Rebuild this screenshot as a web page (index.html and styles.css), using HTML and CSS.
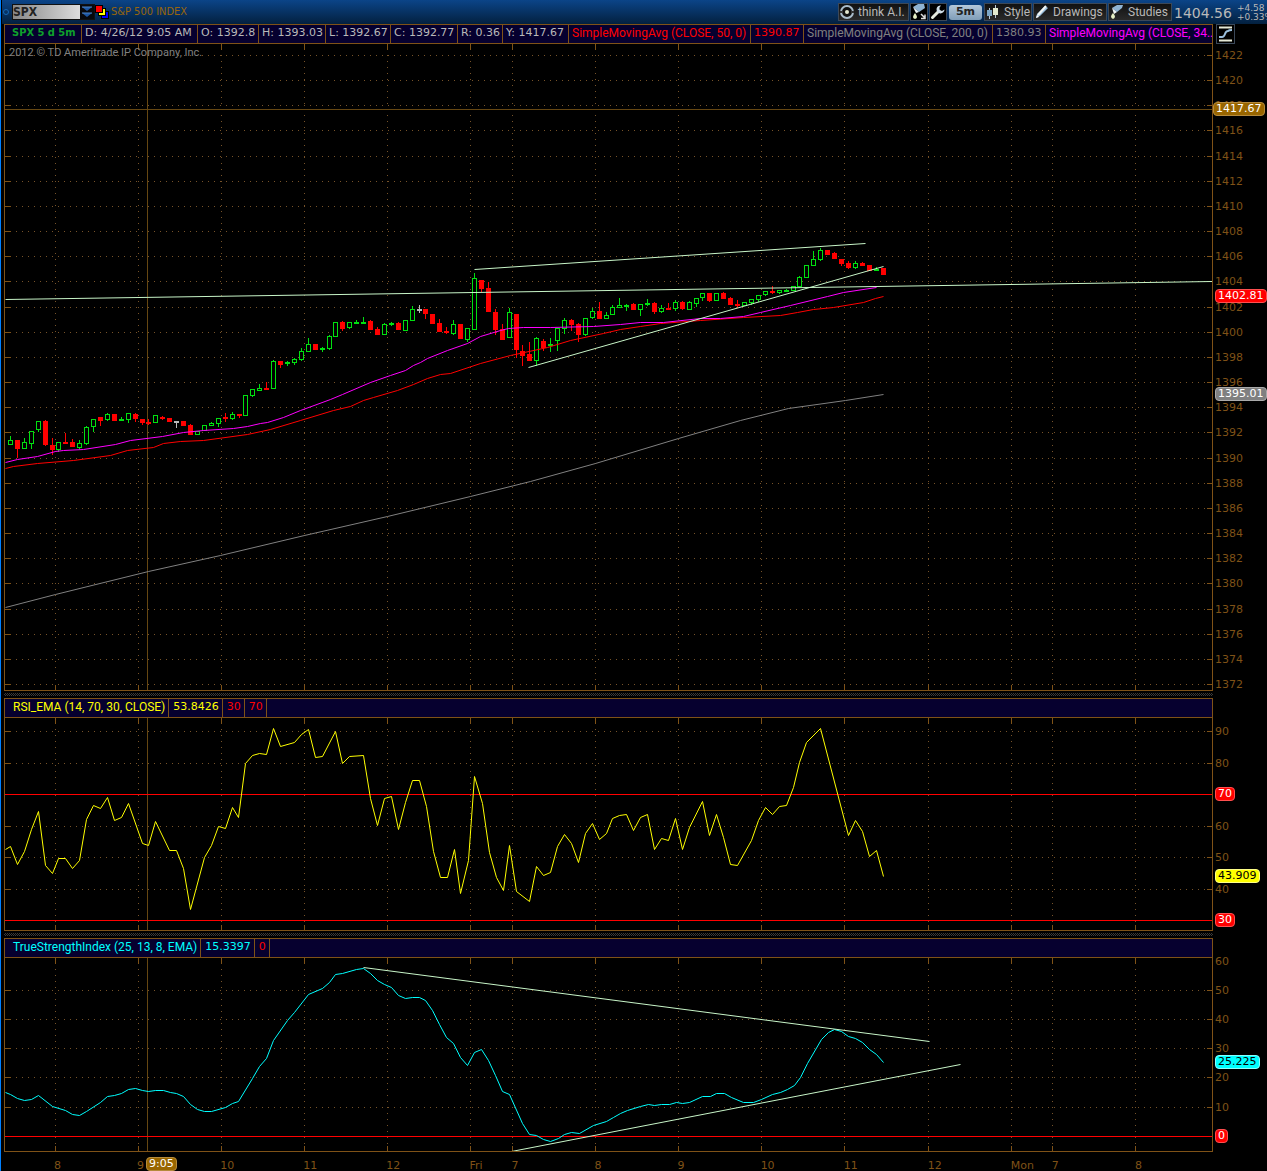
FILE: index.html
```html
<!DOCTYPE html>
<html lang="en">
<head>
  <meta charset="UTF-8">
  <meta name="viewport" content="width=device-width, initial-scale=1.0">
  <title>SPX 5 d 5m - Charts</title>
  <link rel="stylesheet" href="styles.css">
</head>
<body>
  <!-- Top toolbar -->
  <header class="toolbar">
    <span class="link-dot"></span>
    <div class="symbol-box">
      <input type="text" id="symbol" value="SPX" aria-label="Symbol">
      <button class="symbol-drop" aria-label="Recent symbols">
        <svg width="14" height="14" viewBox="0 0 14 14"><path d="M2 2h10L7 6zM2 8h10l-5 4z" fill="#1c55a0"/><path d="M2 2h10M2 8h10" stroke="#4c86c8"/></svg>
      </button>
    </div>
    <svg class="squares" width="14" height="14" viewBox="0 0 14 14" shape-rendering="crispEdges">
      <rect x="6" y="6" width="8" height="8" fill="#000"/>
      <rect x="7" y="7" width="6" height="6" fill="#00f"/>
      <rect x="3" y="3" width="8" height="8" fill="#000"/>
      <rect x="4" y="4" width="6" height="6" fill="#ff0"/>
      <rect x="0" y="0" width="8" height="8" fill="#000"/>
      <rect x="1" y="1" width="6" height="6" fill="#f00"/>
    </svg>
    <span class="symbol-name">S&amp;P 500 INDEX</span>

    <div class="tools">
      <button class="tool tool-ai">
        <svg width="16" height="16" viewBox="0 0 16 16"><circle cx="8" cy="8" r="6" fill="#111" stroke="#a9bccb" stroke-width="2"/><circle cx="8" cy="8" r="2" fill="#e4e8d0"/><path d="M1 8h3M12 8h3" stroke="#333" stroke-width="2"/></svg>
        <span>think A.I.</span>
      </button>
      <button class="tool tool-icon" aria-label="Add study">
        <svg width="16" height="16" viewBox="0 0 16 16"><path d="M2 3l5-3h6l1 4-6 4z" fill="#8fb3d2"/><path d="M2 3l6 5-3 1z" fill="#f0f6f8"/><path d="M4 9q-4 5 0 6q4-1 0-6" fill="#e6efc4"/><path d="M10 10l4 4M14 10.500v4h-4" stroke="#ddd" stroke-width="1.500" fill="none"/></svg>
      </button>
      <button class="tool tool-icon" aria-label="Settings">
        <svg width="16" height="16" viewBox="0 0 16 16"><path d="M2.500 13.500L9 7" stroke="#e3e9dc" stroke-width="3" stroke-linecap="round"/><path d="M11 1.500a4 4 0 1 0 3.500 4L12 7 9.500 6 9.500 3.500z" fill="#cfdde6"/></svg>
      </button>
      <button class="tool-period">5m</button>
      <button class="tool tool-style">
        <svg width="16" height="16" viewBox="0 0 16 16"><path d="M4.500 4v11M10.500 1v13" stroke="#b8c8d8"/><rect x="2" y="6" width="5" height="6" fill="#7ca6c6"/><rect x="8" y="4" width="5" height="7" fill="#e3ead0"/></svg>
        <span>Style</span>
      </button>
      <button class="tool tool-drawings">
        <svg width="16" height="16" viewBox="0 0 16 16"><path d="M2 14l1-4L11 2l3 2-8 8z" fill="#9cc0de"/><path d="M4 11l8-9" stroke="#f2f6f4" stroke-width="2"/><path d="M2 14l1-3 2 2z" fill="#fff"/></svg>
        <span>Drawings</span>
      </button>
      <button class="tool tool-studies">
        <svg width="16" height="16" viewBox="0 0 16 16"><path d="M3 4l5-3h6l-1 3-5 4z" fill="#8fb3d2"/><path d="M3 4l5 4-3 2z" fill="#f0f6f8"/><path d="M4 9q-4 4 0 6q4-2 0-6" fill="#e6efc4"/></svg>
        <span>Studies</span>
      </button>
    </div>
    <div class="quote">
      <span class="last">1404.56</span>
      <span class="change">+4.58<br>+0.33%</span>
    </div>
  </header>

  <main class="charts">
    <!-- Price -->
    <div class="legend-row">
      <div class="legend price-legend">
        <span class="ticker">SPX 5 d 5m</span>
        <span>D: 4/26/12 9:05 AM</span>
        <span>O: 1392.8</span>
        <span>H: 1393.03</span>
        <span>L: 1392.67</span>
        <span>C: 1392.77</span>
        <span>R: 0.36</span>
        <span>Y: 1417.67</span>
        <span class="study red">SimpleMovingAvg (CLOSE, 50, 0)</span>
        <span class="red">1390.87</span>
        <span class="study gray">SimpleMovingAvg (CLOSE, 200, 0)</span>
        <span class="gray">1380.93</span>
        <span class="study magenta">SimpleMovingAvg (CLOSE, 34..</span>
      </div>
      <div class="axis-head">
        <button class="scale-btn" aria-label="Fit scale">
          <svg width="17" height="18" viewBox="0 0 17 18"><path d="M2 2.500h13M2 15.500h13" stroke="#e6e9d6" stroke-width="2"/><path d="M2 12h3q2 0 3-3t3-3q1-1 4-1" stroke="#9cc0de" stroke-width="2" fill="none"/></svg>
        </button>
      </div>
    </div>
    <div class="plot-row price-row">
      <div class="plot">
        <svg id="pricePlot" viewBox="5 44 1207 646" preserveAspectRatio="none"></svg>
        <span class="copyright">2012 © TD Ameritrade IP Company, Inc.</span>
      </div>
      <div class="axis" id="priceAxis"></div>
    </div>

    <div class="splitter"></div>

    <!-- RSI -->
    <div class="legend-row">
      <div class="legend">
        <span class="first study yellow">RSI_EMA (14, 70, 30, CLOSE)</span>
        <span class="yellow">53.8426</span>
        <span class="red">30</span>
        <span class="red">70</span>
      </div>
      <div class="axis-head"></div>
    </div>
    <div class="plot-row rsi-row">
      <div class="plot">
        <svg id="rsiPlot" viewBox="5 718 1207 212" preserveAspectRatio="none"></svg>
      </div>
      <div class="axis" id="rsiAxis"></div>
    </div>

    <div class="splitter"></div>

    <!-- True Strength Index -->
    <div class="legend-row">
      <div class="legend">
        <span class="first study cyan">TrueStrengthIndex (25, 13, 8, EMA)</span>
        <span class="cyan">15.3397</span>
        <span class="red">0</span>
      </div>
      <div class="axis-head"></div>
    </div>
    <div class="plot-row tsi-row">
      <div class="plot">
        <svg id="tsiPlot" viewBox="5 958 1207 193" preserveAspectRatio="none"></svg>
      </div>
      <div class="axis" id="tsiAxis"></div>
    </div>

    <div class="time-axis" id="timeAxis"></div>
  </main>

  <script src="chart.js"></script>
</body>
</html>
```
FILE: styles.css
```css
* {
  box-sizing: border-box;
}
body {
  margin: 0;
  height: 100vh;
  min-height: 600px;
  display: flex;
  flex-direction: column;
  background: #000;
  color: #b9b9b9;
  border-left: 1px solid #0080ff;
  font-family: "DejaVu Sans", Verdana, sans-serif;
  font-size: 11px;
  line-height: 14px;
  overflow: hidden;
}
button,
input {
  font-family: inherit;
  font-size: inherit;
  line-height: inherit;
  color: inherit;
  margin: 0;
  padding: 0;
}
svg {
  display: block;
}

/* Toolbar */
.toolbar {
  flex: none;
  height: 24px;
  display: flex;
  align-items: center;
  margin-left: 1px;
  padding-left: 1px;
  background: linear-gradient(#0b4488, #03203f);
  white-space: nowrap;
  overflow: hidden;
}
.link-dot {
  width: 6px;
  height: 6px;
  border: 1px solid #1468b8;
  border-radius: 50%;
  margin-right: 3px;
}
.symbol-box {
  display: flex;
  height: 16px;
  border: 1px solid #111;
}
.symbol-box input {
  width: 67px;
  border: 0;
  background: linear-gradient(90deg, #888, #ddd);
  color: #222;
  font: bold 12px "DejaVu Sans Condensed", sans-serif;
}
.symbol-drop {
  width: 14px;
  border: 0;
  background: #08090c;
}
.squares {
  margin: 0 2px 0 0;
}
.symbol-name {
  flex: 1;
  color: #99660c;
  font-family: "DejaVu Sans Condensed", sans-serif;
}
.tools {
  display: flex;
  gap: 1px;
  align-items: center;
}
.tool {
  display: flex;
  align-items: center;
  gap: 3px;
  height: 18px;
  padding: 0;
  border: 1px solid #3b4858;
  background: linear-gradient(#111, #2a2a2a);
  text-align: left;
}
.tool-icon {
  width: 18px;
  background: #000;
}
.tool-ai { width: 71px; }
.tool-style { width: 48px; }
.tool-drawings { width: 74px; }
.tool-studies { width: 64px; }
.tool span {
  font-family: Roboto, sans-serif;
  font-size: 12px;
}
.tool-period {
  width: 33px;
  height: 15px;
  margin: 0 1px;
  border: 0;
  border-radius: 3px;
  background: linear-gradient(#b4c8da, #7f9db8);
  color: #222;
  font-weight: bold;
}
.quote {
  width: 95px;
  padding-left: 2px;
  display: flex;
  align-items: center;
  gap: 5px;
}
.last {
  font-size: 14px;
  line-height: 18px;
  padding-top: 2px;
}
.change {
  font-size: 9px;
  line-height: 9px;
  padding-top: 2px;
}

/* Panels */
.charts {
  flex: 1;
  min-height: 0;
  display: flex;
  flex-direction: column;
  padding-left: 3px;
}
.legend-row {
  flex: none;
  display: flex;
  height: 20px;
}
.legend {
  flex: 1;
  min-width: 0;
  display: flex;
  background: #06002f;
  border: 1px solid #7f5217;
  overflow: hidden;
  white-space: nowrap;
  line-height: 16px;
}
.legend span {
  padding: 0 3px 0 4px;
  border-right: 1px solid #7f5217;
}
.legend .ticker {
  color: #0fa02c;
  font-weight: bold;
  font-family: "DejaVu Sans Condensed", sans-serif;
  padding-left: 7px;
}
.legend .study {
  font-family: Roboto, sans-serif;
  font-size: 12px;
}
.legend .first {
  padding-left: 8px;
}
.price-legend {
  display: grid;
  grid-template-columns: 77px 116px 61px 67px 65px 67px 45px 66px 182px 53px 189px 53px 1fr;
}
.price-legend span {
  padding: 0 0 0 3px;
}
.price-legend span:last-child {
  border-right: 0;
}
.legend .red { color: #f00; }
.legend .gray { color: #808080; }
.legend .magenta { color: #f0f; }
.legend .yellow { color: #ff0; }
.legend .cyan { color: #0ff; }

.axis-head,
.axis {
  flex: none;
  width: 54px;
}
.scale-btn {
  margin-left: 3px;
  width: 19px;
  height: 20px;
  border: 1px solid #3b4858;
  background: #000;
}
.plot-row {
  display: flex;
  min-height: 0;
}
.price-row { flex: 647 1 0; }
.rsi-row { flex: 213 1 0; }
.tsi-row { flex: 194 1 0; }
.plot {
  flex: 1;
  min-width: 0;
  position: relative;
  border: solid #7f5217;
  border-width: 0 1px 1px;
}
.plot svg {
  width: 100%;
  height: 100%;
}
.copyright {
  position: absolute;
  left: 4px;
  top: 2px;
  color: #808080;
  font-family: Roboto, sans-serif;
  font-size: 11px;
}
.splitter {
  flex: none;
  height: 7px;
  margin-right: 54px;
  background: repeating-conic-gradient(#3a3a3a 0 25%, #000 0 50%) 0 0 / 2px 2px content-box;
  padding: 2px 0;
}

/* Axis labels */
.axis {
  position: relative;
  color: #7f5217;
}
.axis span {
  position: absolute;
  left: 2px;
  padding-top: 2px;
  transform: translateY(-50%);
}
.axis .tag,
.time-axis .tag {
  z-index: 1;
  padding: 0 2px;
  border: 1px solid;
  border-radius: 4px;
  line-height: 12px;
  color: #fff;
}
.axis .tag-cursor {
  left: 0;
}
.tag-cursor { background: #960; border-color: #b58a3c !important; }
.tag-red { background: #f00; border-color: #ff5050 !important; }
.tag-gray { background: #808080; border-color: #aaa !important; }
.tag-yellow { background: #ff0; border-color: #ff8 !important; color: #000 !important; }
.tag-cyan { background: #0ff; border-color: #8ff !important; color: #000 !important; }
.time-axis {
  flex: none;
  position: relative;
  height: 19px;
  margin-right: 55px;
  color: #7f5217;
}
.time-axis span {
  position: absolute;
  top: 7px;
}
.time-axis .tag {
  top: 5px;
}

/* Plot drawing */
.grid {
  fill: none;
  stroke: #775329;
  stroke-dasharray: 1 5;
  shape-rendering: crispEdges;
}
.tick {
  stroke: #7f5217;
  shape-rendering: crispEdges;
}
.cross {
  stroke: #664712;
  shape-rendering: crispEdges;
}
.level {
  stroke: #f00;
  shape-rendering: crispEdges;
}
.candle { shape-rendering: crispEdges; }
.up { stroke: #00e010; fill: #000; }
.down { stroke: #f00; fill: #f00; }
.flat { stroke: #b9b9b9; fill: #b9b9b9; }
.line { fill: none; stroke-width: 1; }
.ma34 { stroke: #f0f; }
.ma50 { stroke: #f00; }
.ma200 { stroke: #808080; }
.rsi { stroke: #ff0; }
.tsi { stroke: #0ff; }
.trend { stroke: #c8f5c8; }
```
FILE: chart.js
```js
const X0 = 5, X1 = 1212;
const hours = [
  [55, '8'], [138, '9'], [221, '10'], [304, '11'], [387, '12'], [470, 'Fri'], [512, '7'],
  [595, '8'], [678, '9'], [761, '10'], [844, '11'], [928, '12'], [1011, 'Mon'], [1052, '7'], [1135, '8']
];

// type, high, body top, body bottom, low
const candles = `
G 436 440 444 444|R 440 440 448 457|G 438 442 448 448|G 431 431 443 448|G 421 421 429 431|R 420 421 444 445
R 438 445 449 454|G 442 442 449 451|R 433 442 443 443|R 439 442 446 446|G 440 443 447 448|G 426 427 443 444
G 419 419 426 431|R 417 417 420 425|G 413 414 419 420|R 414 414 420 420|G 417 419 420 420|G 413 413 419 422
R 413 414 418 421|R 419 419 422 424|R 419 422 423 424|G 415 415 422 422|R 416 417 418 419|R 418 418 421 421
W 421 421 422 427|R 421 421 425 425|R 424 425 434 434|G 431 431 434 434|G 425 425 430 430|G 422 423 425 425
G 418 418 423 426|R 413 417 418 421|G 412 414 418 419|R 414 414 415 417|G 395 395 415 415|G 389 389 395 396
G 384 388 390 390|R 382 388 389 389|G 360 361 388 388|R 361 361 364 367|G 361 362 363 365|G 358 359 362 364
G 348 351 359 360|G 338 344 351 351|R 344 344 349 349|G 347 348 349 351|G 335 336 348 349|G 322 322 336 336
R 321 322 328 330|G 322 322 327 328|G 320 322 323 323|G 317 322 323 323|R 320 321 329 329|R 327 329 334 334
G 323 324 334 334|G 322 323 324 325|R 322 323 329 329|G 320 320 330 330|G 306 309 320 320|W 305 309 310 312
R 309 309 313 318|R 314 314 323 323|R 319 323 331 331|R 327 331 332 333|G 320 324 333 334|R 324 324 338 338
G 328 328 339 341|G 273 278 329 329|R 280 280 288 291|R 282 288 311 311|R 309 312 329 334|R 324 329 339 339
G 308 312 337 337|R 314 314 349 357|R 345 351 355 365|R 342 354 360 360|G 337 338 360 365|R 339 341 347 350
G 338 344 345 351|G 328 328 340 350|G 318 320 328 333|R 319 320 324 330|R 323 324 334 341|G 318 318 334 335
G 308 311 317 318|R 302 311 318 318|G 312 315 318 318|G 305 307 314 314|G 298 305 307 307|G 304 305 306 310
R 303 304 309 309|G 304 304 309 315|G 299 303 304 305|R 302 303 311 313|G 305 308 311 312|R 303 308 309 309
G 300 302 308 310|R 301 302 308 309|G 301 302 309 309|G 298 298 303 306|G 293 293 297 300|R 293 293 300 301
G 293 293 300 300|R 292 293 298 298|R 297 298 304 304|R 300 304 305 307|G 302 302 305 305|G 299 299 302 304
G 295 295 299 301|G 291 291 294 295|R 286 291 292 293|G 290 290 292 293|G 289 290 291 291|G 286 286 290 290
G 276 277 286 286|G 265 265 277 277|G 251 259 265 265|G 248 250 259 260|R 250 250 254 254|R 252 253 258 258
R 259 259 263 265|R 261 263 267 268|G 261 263 267 268|R 262 263 265 265|R 265 265 270 270|G 267 269 270 270
R 268 268 274 274`.trim().split(/[|\n]/).map(c => c.split(' '));

const ma34 = '5,462 17,459 37,456 55,451 63,450 83,449 115,444 130,440 162,436 183,432 203,430 233,428 247,426 260,423 267,422 283,417 300,410 330,399 342,394 370,382 390,375 405,370 413,365 420,362 427,358 447,350 467,343 480,336 500,330 508,328 523,327 550,327 593,326 620,324 640,322 663,322 700,318 720,318 743,316 760,312 790,305 827,296 843,292 876,287';
const ma50 = '5,468 13,466 37,463 73,460 110,455 127,450 153,447 163,443 180,441 203,440 247,434 270,429 300,420 333,410 350,406 363,400 373,397 397,390 413,384 427,378 440,374 450,373 480,363 510,355 547,347 570,340 603,333 620,329 640,326 660,323 700,320 743,317 780,315 797,312 813,309 833,307 863,302 875,298 883,296';
const ma200 = '5,607 55,594 148,571 220,555 304,535 387,516 470,496 530,481 595,463 678,438 740,420 788,408 845,400 883,394';
const rsi = '5,849 10,846 17,864 24,851 31,829 38,811 45,865 52,873 58,858 65,858 72,868 79,860 86,819 93,805 100,808 107,797 114,820 121,817 128,803 142,843 148,845 155,821 169,850 176,850 183,868 190,909 204,857 211,845 218,826 225,828 232,807 238,817 245,763 252,755 259,753 266,754 273,728 280,746 294,742 301,734 308,729 315,757 322,756 335,731 342,763 349,756 363,755 370,798 377,825 384,798 391,796 398,829 405,802 412,780 419,780 426,806 433,851 440,877 447,877 454,849 460,893 468,860 474,776 482,803 489,852 496,877 503,890 509,845 516,891 529,901 536,866 543,875 550,872 557,846 564,834 571,843 578,862 585,833 592,823 599,839 606,833 612,818 619,815 626,814 633,830 640,817 647,814 654,849 661,838 668,840 675,818 682,849 689,827 702,801 709,835 716,814 723,837 730,864 737,865 751,840 758,820 765,807 772,814 779,806 786,805 793,787 799,762 806,742 820,728 848,835 855,820 862,831 869,856 876,850 883,876';
const tsi = '5,1092 10,1094 17,1098 24,1100 31,1099 38,1095 52,1106 65,1110 72,1114 79,1115 86,1111 100,1102 107,1096 114,1095 121,1093 128,1089 135,1088 142,1090 148,1091 155,1090 163,1090 170,1092 176,1093 183,1096 190,1104 197,1109 204,1111 211,1111 225,1107 232,1103 238,1101 252,1078 259,1066 266,1058 273,1040 287,1020 294,1012 308,994 322,988 329,982 335,974 342,973 356,969 363,968 370,973 377,980 384,984 391,987 398,995 405,998 412,997 419,997 425,1000 432,1010 439,1024 446,1037 453,1043 460,1057 467,1065 474,1052 481,1049 488,1060 495,1075 502,1091 509,1094 522,1123 529,1134 536,1135 543,1139 550,1141 558,1138 564,1134 571,1132 579,1133 593,1125 606,1121 613,1117 620,1113 627,1110 640,1106 648,1104 654,1105 661,1104 669,1104 676,1102 682,1103 689,1102 702,1096 710,1096 716,1093 724,1093 731,1097 743,1102 753,1102 761,1099 772,1094 780,1092 787,1089 794,1085 800,1077 807,1063 821,1039 828,1032 834,1029 841,1031 848,1036 855,1038 862,1042 869,1049 876,1054 883,1062';

function line(x1, y1, x2, y2, cls) {
  return `<line class="${cls}" x1="${x1}" y1="${y1}" x2="${x2}" y2="${y2}"/>`;
}

function poly(points, cls) {
  return `<polyline class="line ${cls}" points="${points}" transform="translate(0.5 0.5)"/>`;
}

// dotted grid, ticks on all sides and the cursor line
function drawGrid(top, bottom, rows) {
  let out = '';
  hours.forEach(([x]) => {
    const c = x + 0.5;
    out += line(c, top + 11, c, bottom - 6, 'grid');
    out += line(c, top, c, top + 6, 'tick') + line(c, bottom - 5, c, bottom, 'tick');
  });
  rows.forEach(y => {
    const c = y + 0.5;
    out += line(16, c, X1 - 6, c, 'grid');
    out += line(X0, c, X0 + 6, c, 'tick') + line(X1 - 5, c, X1, c, 'tick');
  });
  return out + line(147.5, top, 147.5, bottom, 'cross');
}

function drawCandle([type, high, bodyTop, bodyBottom, low], i) {
  const x = Math.floor(10.47 + 6.9252 * i);
  const cls = { G: 'up', R: 'down', W: 'flat' }[type];
  return `<g class="candle ${cls}">` + line(x + 0.5, +high, x + 0.5, +low + 1, '') +
    `<rect x="${x - 1.5}" y="${+bodyTop + 0.5}" width="4" height="${bodyBottom - bodyTop}"/></g>`;
}

// labels and tags are [y, text, class]
function drawAxis(id, top, height, labels) {
  document.getElementById(id).innerHTML = labels.map(([y, text, cls]) =>
    `<span class="${cls ? 'tag ' + cls : ''}" style="top: ${(y - top) / height * 100}%">${text}</span>`).join('');
}

const priceLabels = [];
for (let p = 1422; p >= 1372; p -= 2) {
  priceLabels.push([Math.round(55 + (1422 - p) * 12.58), p]);
}
document.getElementById('pricePlot').innerHTML =
  drawGrid(44, 690, priceLabels.map(l => l[0])) +
  line(X0, 109.5, X1, 109.5, 'cross') +
  candles.map(drawCandle).join('') +
  poly(ma200, 'ma200') + poly(ma50, 'ma50') + poly(ma34, 'ma34') +
  poly('5,299 1212,281', 'trend') + poly('474,269 865,243', 'trend') + poly('528,367 883,266', 'trend');
drawAxis('priceAxis', 44, 647, priceLabels.concat([
  [109, '1417.67', 'tag-cursor'], [296, '1402.81', 'tag-red'], [394, '1395.01', 'tag-gray']
]));

const rsiLabels = [[731, 90], [763, 80], [826, 60], [857, 50], [889, 40]];
document.getElementById('rsiPlot').innerHTML =
  drawGrid(718, 930, rsiLabels.map(l => l[0])) +
  line(X0, 794.5, X1, 794.5, 'level') + line(X0, 920.5, X1, 920.5, 'level') + poly(rsi, 'rsi');
drawAxis('rsiAxis', 718, 213, rsiLabels.concat([
  [794, '70', 'tag-red'], [876, '43.909', 'tag-yellow'], [920, '30', 'tag-red']
]));

const tsiLabels = [[990, 50], [1019, 40], [1048, 30], [1077, 20], [1107, 10]];
document.getElementById('tsiPlot').innerHTML =
  drawGrid(958, 1151, tsiLabels.map(l => l[0])) +
  line(X0, 1136.5, X1, 1136.5, 'level') + poly(tsi, 'tsi') +
  poly('363,967 929,1041', 'trend') + poly('511,1151 960,1064', 'trend');
drawAxis('tsiAxis', 958, 194, [[961, 60]].concat(tsiLabels, [
  [1062, '25.225', 'tag-cyan'], [1136, '0', 'tag-red']
]));

document.getElementById('timeAxis').innerHTML = hours.concat([[147, '9:05', 'tag tag-cursor']]).map(([x, text, cls]) =>
  `<span class="${cls || ''}" style="left: ${(x - X0) / (X1 - X0) * 100}%">${text}</span>`).join('');
```
